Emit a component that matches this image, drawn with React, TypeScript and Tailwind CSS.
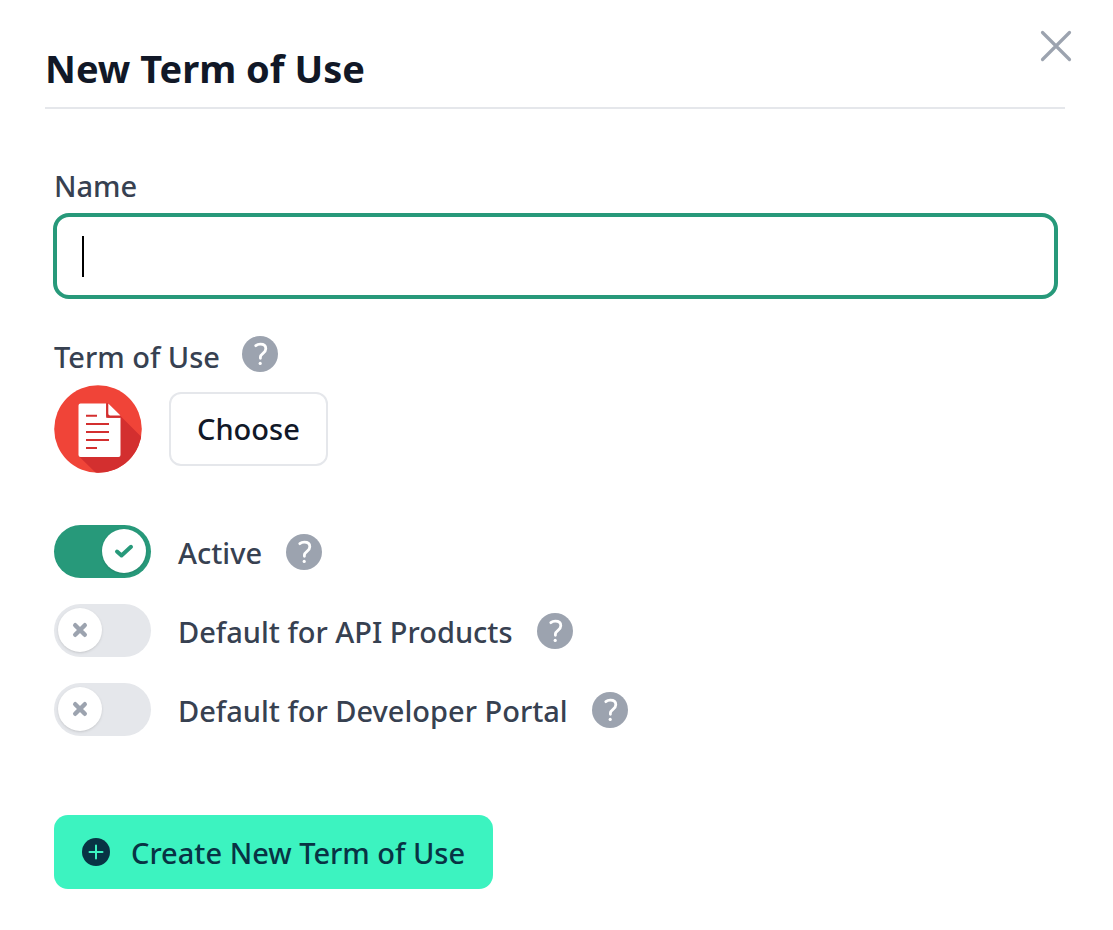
import { useState } from 'react';

function HelpIcon({ label }: { label: string }) {
  return (
    <button type="button" aria-label={label} className="size-9 shrink-0 rounded-full">
      <svg viewBox="0 0 36 36" className="size-9" aria-hidden="true">
        <circle cx="18" cy="18" r="18" fill="#9ca3af" />
        <path
          d="M13.8 9.7C15 8.7 16.6 8.2 18.3 8.2c3.3 0 5.5 1.7 5.5 4.5 0 2.1-1.1 3.3-2.8 4.6-1.7 1.3-2.6 2.1-2.6 3.8v1.2"
          fill="none"
          stroke="#fff"
          strokeWidth="2.8"
          strokeLinecap="round"
          strokeLinejoin="round"
        />
        <circle cx="18.2" cy="27.4" r="1.6" fill="#fff" />
      </svg>
    </button>
  );
}

function DocumentIcon() {
  return (
    <svg viewBox="0 0 88 88" className="size-[88px] shrink-0" aria-hidden="true">
      <defs>
        <clipPath id="disc">
          <circle cx="44" cy="44" r="43.8" />
        </clipPath>
      </defs>
      <g clipPath="url(#disc)">
        <rect width="88" height="88" fill="#f04438" />
        <path d="M54 18.5L88 52.5V88H42L24.6 71L40 40Z" fill="#d32f2f" />
      </g>
      <path d="M26.5 18.5H52.2V32.7H66.5V70a2 2 0 0 1-2 2H26.5a2 2 0 0 1-2-2V20.5a2 2 0 0 1 2-2Z" fill="#fff" />
      <path d="M52.2 18.3H54.3V28.4a2 2 0 0 0 2 2H66.5V32.7H54.5a2.3 2.3 0 0 1-2.3-2.3Z" fill="#d32f2f" />
      <path d="M54.3 18.5L66.5 30.6H56.5a2 2 0 0 1-2.2-2Z" fill="#fff" />
      <path d="M32 30.7h11M32 39h23M32 47h23M32 55h23M32 63h11" stroke="#d32f2f" strokeWidth="2" fill="none" />
    </svg>
  );
}

type ToggleProps = { id: string; label: string; initial?: boolean };

function Toggle({ id, label, initial = false }: ToggleProps) {
  const [on, setOn] = useState(initial);
  return (
    <div className="flex items-center gap-6">
      <label htmlFor={id} className="flex cursor-pointer items-center gap-[27px]">
        <input
          id={id}
          type="checkbox"
          role="switch"
          checked={on}
          onChange={(e) => setOn(e.target.checked)}
          className="peer sr-only"
        />
        <span className="flex h-[53px] w-[97px] shrink-0 items-start rounded-full bg-[#e5e7eb] pt-1 pr-[5px] pl-1 peer-checked:justify-end peer-checked:bg-[#27997a]">
          <span className="flex size-11 items-center justify-center rounded-full bg-white shadow-sm">
            {on ? (
              <svg viewBox="0 0 20 16" className="h-4 w-5" fill="none" aria-hidden="true">
                <path d="M3 8.5L7.5 12.5L17 3.8" stroke="#27997a" strokeWidth="4" strokeLinecap="round" strokeLinejoin="round" />
              </svg>
            ) : (
              <svg viewBox="0 0 16 16" className="size-4" fill="none" aria-hidden="true">
                <path d="M3.2 3.2L12.8 12.8M12.8 3.2L3.2 12.8" stroke="#9ca3af" strokeWidth="4.4" strokeLinecap="round" />
              </svg>
            )}
          </span>
        </span>
        <span className="pt-[2px]">{label}</span>
      </label>
      <HelpIcon label={`About ${label}`} />
    </div>
  );
}

export default function App() {
  const [name, setName] = useState('');
  return (
    <main
      role="dialog"
      aria-labelledby="title"
      className="relative min-h-screen bg-white pt-11 pr-12 pb-10 pl-[45px] font-['Noto_Sans','Open_Sans',sans-serif] text-[29px] leading-10 font-medium text-[#374151]"
    >
      <button type="button" aria-label="Close" className="absolute top-[30px] right-[41px] size-8">
        <svg viewBox="0 0 32 32" className="size-8" fill="none" aria-hidden="true">
          <path d="M2.5 2.5L29.5 29.5M29.5 2.5L2.5 29.5" stroke="#9ca3af" strokeWidth="3.2" strokeLinecap="round" />
        </svg>
      </button>

      <header className="border-b-2 border-[#e5e7eb] pb-[15px]">
        <h1 id="title" className="text-[38px] leading-[48px] font-bold text-[#111827]">
          New Term of Use
        </h1>
      </header>

      <form className="pt-[57px] pr-[7px] pl-[9px]" onSubmit={(e) => e.preventDefault()}>
        <label htmlFor="name" className="block">
          Name
        </label>
        <div className="relative mt-[7px] -ml-px">
          <input
            id="name"
            type="text"
            value={name}
            onChange={(e) => setName(e.target.value)}
            className="block h-[86px] w-full rounded-2xl border-4 border-[#27997a] bg-white px-[26px] text-[#111827] caret-transparent outline-none"
          />
          {name === '' && (
            <span className="pointer-events-none absolute top-[23px] left-[29px] h-[41px] w-[2px] bg-black" />
          )}
        </div>

        <div className="mt-[37px] flex items-start gap-[22px]">
          <span className="pt-px">Term of Use</span>
          <HelpIcon label="About Term of Use" />
        </div>
        <div className="mt-2 flex items-center gap-[27px]">
          <DocumentIcon />
          <button type="button" className="h-[74px] rounded-xl border-2 border-[#e5e7eb] px-[26px] text-[#111827]">
            Choose
          </button>
        </div>

        <div className="mt-[52px] flex flex-col gap-[26px]">
          <Toggle id="active" label="Active" initial />
          <Toggle id="api-products" label="Default for API Products" />
          <Toggle id="developer-portal" label="Default for Developer Portal" />
        </div>

        <button
          type="submit"
          className="mt-[79px] flex h-[74px] items-center gap-[21px] rounded-[14px] bg-[#3cf3c0] px-7 text-[#083344]"
        >
          <svg viewBox="0 0 28 28" className="size-7" aria-hidden="true">
            <circle cx="14" cy="14" r="14" fill="#083344" />
            <path d="M14 7.5V20.5M7.5 14H20.5" stroke="#3cf3c0" strokeWidth="2" strokeLinecap="round" />
          </svg>
          <span className="pt-[2px]">Create New Term of Use</span>
        </button>
      </form>
    </main>
  );
}
